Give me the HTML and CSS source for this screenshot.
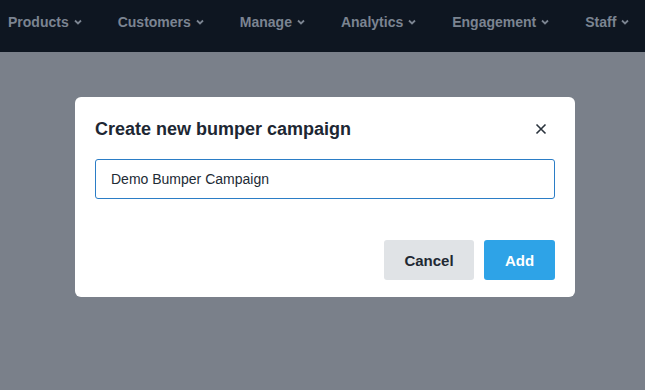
FILE: index.html
```html
<!DOCTYPE html>
<html lang="en">
<head>
  <meta charset="UTF-8">
  <title>Create new bumper campaign</title>
  <link rel="stylesheet" href="styles.css">
</head>
<body>
  <nav class="topnav">
    <a class="nav-item">Products <svg class="chev" viewBox="0 0 10 10"><path d="M2 3.5l3 3 3-3"/></svg></a>
    <a class="nav-item">Customers <svg class="chev" viewBox="0 0 10 10"><path d="M2 3.5l3 3 3-3"/></svg></a>
    <a class="nav-item">Manage <svg class="chev" viewBox="0 0 10 10"><path d="M2 3.5l3 3 3-3"/></svg></a>
    <a class="nav-item">Analytics <svg class="chev" viewBox="0 0 10 10"><path d="M2 3.5l3 3 3-3"/></svg></a>
    <a class="nav-item">Engagement <svg class="chev" viewBox="0 0 10 10"><path d="M2 3.5l3 3 3-3"/></svg></a>
    <a class="nav-item">Staff <svg class="chev" viewBox="0 0 10 10"><path d="M2 3.5l3 3 3-3"/></svg></a>
  </nav>

  <div class="overlay">
    <div class="modal">
      <div class="modal-head">
        <h2>Create new bumper campaign</h2>
        <button class="close" aria-label="Close">
          <svg viewBox="0 0 12 12"><path d="M1.5 1.5l9 9M10.5 1.5l-9 9"/></svg>
        </button>
      </div>
      <input class="field" type="text" value="Demo Bumper Campaign">
      <div class="modal-foot">
        <button class="btn btn-cancel">Cancel</button>
        <button class="btn btn-add">Add</button>
      </div>
    </div>
  </div>
</body>
</html>
```

FILE: styles.css
```css
* {
  box-sizing: border-box;
  margin: 0;
  padding: 0;
}

body {
  width: 645px;
  height: 390px;
  overflow: hidden;
  font-family: 'Liberation Sans', Arial, sans-serif;
  background: #7a808a;
}

.topnav {
  height: 52px;
  background: #0e1621;
  display: flex;
  align-items: flex-start;
  padding: 14px 0 0 8px;
  gap: 35px;
}

.nav-item {
  display: flex;
  align-items: center;
  gap: 4px;
  color: #7b8491;
  font-size: 14px;
  font-weight: bold;
  white-space: nowrap;
}

.chev {
  width: 10px;
  height: 10px;
  fill: none;
  stroke: #7b8491;
  stroke-width: 1.8;
}

.overlay {
  display: flex;
  padding: 45px 0 0 75px;
}

.modal {
  width: 500px;
  height: 200px;
  background: #fff;
  border-radius: 6px;
  padding: 20px 20px 17px;
  display: flex;
  flex-direction: column;
}

.modal-head {
  display: flex;
  justify-content: space-between;
  align-items: center;
  height: 24px;
}

.modal-head h2 {
  font-size: 18px;
  font-weight: bold;
  color: #1d2733;
}

.close {
  border: none;
  background: none;
  width: 12px;
  height: 12px;
  margin-right: 8px;
  display: flex;
}

.close svg {
  width: 12px;
  height: 12px;
  fill: none;
  stroke: #2a333d;
  stroke-width: 1.6;
}

.field {
  margin-top: 18px;
  height: 40px;
  width: 100%;
  border: 1px solid #2b7dc6;
  border-radius: 3px;
  padding: 0 15px;
  font-family: inherit;
  font-size: 14px;
  color: #222b35;
  outline: none;
}

.modal-foot {
  margin-top: auto;
  display: flex;
  justify-content: flex-end;
  gap: 10px;
}

.btn {
  height: 40px;
  border: none;
  border-radius: 3px;
  font-family: inherit;
  font-size: 15px;
  font-weight: bold;
}

.btn-cancel {
  width: 90px;
  background: #e0e3e6;
  color: #1f2933;
}

.btn-add {
  width: 71px;
  background: #2ea3e7;
  color: #fff;
}
```
